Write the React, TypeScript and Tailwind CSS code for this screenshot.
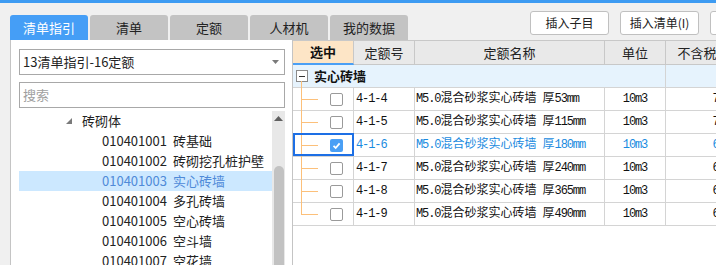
import React from 'react';

const tabs = ['清单指引', '清单', '定额', '人材机', '我的数据'];

const treeItems = [
  ['010401001', '砖基础'],
  ['010401002', '砖砌挖孔桩护壁'],
  ['010401003', '实心砖墙'],
  ['010401004', '多孔砖墙'],
  ['010401005', '空心砖墙'],
  ['010401006', '空斗墙'],
  ['010401007', '空花墙'],
];

const rows = [
  { code: '4-1-4', name: 'M5.0混合砂浆实心砖墙 厚53mm', price: '718.50' },
  { code: '4-1-5', name: 'M5.0混合砂浆实心砖墙 厚115mm', price: '723.46' },
  { code: '4-1-6', name: 'M5.0混合砂浆实心砖墙 厚180mm', price: '659.77', checked: true },
  { code: '4-1-7', name: 'M5.0混合砂浆实心砖墙 厚240mm', price: '651.28' },
  { code: '4-1-8', name: 'M5.0混合砂浆实心砖墙 厚365mm', price: '637.91' },
  { code: '4-1-9', name: 'M5.0混合砂浆实心砖墙 厚490mm', price: '632.14' },
];

// SimSun style: latin runs are half width
const Mixed = ({ text }: { text: string }) => (
  <>
    {text.split(/([\x20-\x7e]+)/).map((part, i) =>
      /^[\x20-\x7e]+$/.test(part) ? (
        <span key={i} className="font-['Liberation_Mono',monospace] text-[12px] tracking-[-1.1px] whitespace-pre">
          {part}
        </span>
      ) : (
        <span key={i}>{part}</span>
      )
    )}
  </>
);

const App = () => {
  return (
    <div className="w-[716px] h-[265px] overflow-hidden bg-[#f0f0f0] flex flex-col font-['Noto_Sans_CJK_SC',sans-serif]">
      <div className="h-[3px] shrink-0 bg-[#3d9bf2]"></div>

      {/* tabs + buttons */}
      <div className="h-[37px] shrink-0 flex">
        <div className="flex items-end gap-[2px] pl-[10px] shrink-0">
          {tabs.map((t, i) => (
            <div
              key={t}
              className={
                i === 0
                  ? 'w-[78px] h-[25px] rounded-t-[3px] flex items-center justify-center text-[13px] bg-[#459ef6] text-white'
                  : 'w-[78px] h-[25px] rounded-t-[3px] flex items-center justify-center text-[13px] bg-[#c3c3c3] text-[#222]'
              }
            >
              {t}
            </div>
          ))}
        </div>
        <div className="flex gap-[11px] pt-[8px] ml-[122px] shrink-0">
          {['插入子目', '插入清单(I)', '删除'].map((b) => (
            <div
              key={b}
              className="w-[79px] h-[24px] shrink-0 bg-white border border-[#c0c0c0] rounded-[3px] flex items-center justify-center text-[12px] text-[#222]"
            >
              {b}
            </div>
          ))}
        </div>
      </div>

      <div className="flex-1 min-h-0 flex">
        {/* left panel */}
        <div className="ml-[10px] w-[283px] shrink-0 bg-white border-l border-r border-[#c4c4c4] flex flex-col pl-[8px] pt-[9px]">
          <div className="w-[266px] h-[26px] border border-[#a8a8a8] flex items-center pl-[3px] pr-[5px] text-[13px] text-[#222]">
            <span>13清单指引-16定额</span>
            <svg className="ml-auto" width="7" height="4" viewBox="0 0 7 4">
              <polygon points="0,0 7,0 3.5,4" fill="#7a7a7a" />
            </svg>
          </div>
          <div className="mt-[7px] w-[266px] h-[26px] border border-[#a8a8a8] flex items-center pl-[3px] text-[13px] text-[#a0a0a0]">
            搜索
          </div>
          <div className="mt-[3px] flex-1 min-h-0 flex">
            <div className="w-[253px] flex flex-col text-[13px] text-[#222]">
              <div className="h-[20px] shrink-0 flex items-center pl-[47px]">
                <svg width="6" height="6" viewBox="0 0 6 6">
                  <polygon points="6,0 6,6 0,6" fill="#7a7a7a" />
                </svg>
                <span className="ml-[10px]">砖砌体</span>
              </div>
              {treeItems.map(([code, name]) => (
                <div
                  key={code}
                  className={
                    code === '010401003'
                      ? 'h-[20px] shrink-0 flex items-center pl-[83px] bg-[#cce8ff] text-[#4f8ad8]'
                      : 'h-[20px] shrink-0 flex items-center pl-[83px]'
                  }
                >
                  <span className="w-[71px]">{code}</span>
                  <span>{name}</span>
                </div>
              ))}
            </div>
            <div className="w-[13px] bg-[#e8e8e8] flex flex-col items-center">
              <svg className="mt-[5px] shrink-0" width="9" height="5" viewBox="0 0 9 5">
                <polygon points="4.5,0 9,5 0,5" fill="#606060" />
              </svg>
              <div className="mt-[45px] w-[10px] flex-1 rounded-t-full bg-[#c2c2c2]"></div>
            </div>
          </div>
        </div>

        {/* quota table */}
        <div className="flex-1 min-w-0 bg-white overflow-hidden border-t border-[#c8c8c8]">
          <div className="w-[475px] grid grid-cols-[61px_61px_190px_61px_102px] text-[#111]">
            <div className="h-[24px] flex items-center justify-center bg-[#fde5c6] border-r border-[#c8c8c8] border-b-2 border-b-[#4a9ff5] text-[13px] font-bold">
              选中
            </div>
            {['定额号', '定额名称', '单位', '不含税市场价'].map((h) => (
              <div
                key={h}
                className="h-[24px] flex items-center justify-center bg-[#e9e9e9] border-r border-b border-[#c8c8c8] text-[13px] text-[#222] whitespace-nowrap"
              >
                {h}
              </div>
            ))}

            {/* group row */}
            <div className="col-span-4 relative h-[23px] flex items-center pl-[3px] bg-[#e6f3fd] border-r border-b border-[#d4d4d4]">
              <div className="w-[12px] h-[12px] border border-[#8a8a8a] bg-white flex items-center justify-center">
                <div className="w-[6px] h-px bg-[#333]"></div>
              </div>
              <span className="ml-[6px] text-[13px] font-bold">实心砖墙</span>
              <div className="absolute left-[8px] top-[16px] -bottom-px w-px bg-[#fcc07a]"></div>
            </div>
            <div className="h-[23px] bg-[#e6f3fd] border-b border-[#d4d4d4]"></div>

            {rows.map((r, i) => {
              const last = i === rows.length - 1;
              const text = r.checked ? 'text-[#1a8be0]' : 'text-[#111]';
              return (
                <React.Fragment key={r.code}>
                  <div className="relative h-[23px] flex items-center pl-[37px] border-r border-b border-[#d4d4d4]">
                    <div
                      className={
                        last
                          ? 'absolute left-[8px] -top-px h-[13px] w-px bg-[#fcc07a]'
                          : 'absolute left-[8px] -top-px -bottom-px w-px bg-[#fcc07a]'
                      }
                    ></div>
                    <div className="absolute left-[8px] top-[11px] w-[17px] h-px bg-[#fcc07a]"></div>
                    {r.checked ? (
                      <div className="w-[13px] h-[13px] rounded-[2px] bg-[#4a9ff5] flex items-center justify-center">
                        <svg width="11" height="11" viewBox="0 0 11 11">
                          <path d="M2.5 5.8 L4.7 8 L8.6 3.4" fill="none" stroke="white" strokeWidth="1.8" />
                        </svg>
                      </div>
                    ) : (
                      <div className="w-[13px] h-[13px] rounded-[2px] border border-[#9a9a9a] bg-white"></div>
                    )}
                    {r.checked && (
                      <div className="absolute left-0 -top-px -right-px bottom-0 border-2 border-[#1d6fe5]"></div>
                    )}
                  </div>
                  <div className={`h-[23px] flex items-center pl-[2px] border-r border-b border-[#d4d4d4] text-[12px] font-['Liberation_Mono','Noto_Sans_CJK_SC',monospace] ${text}`}>
                    <Mixed text={r.code} />
                  </div>
                  <div className={`h-[23px] flex items-center pl-px border-r border-b border-[#d4d4d4] text-[12px] whitespace-nowrap font-['Liberation_Mono','Noto_Sans_CJK_SC',monospace] ${text}`}>
                    <Mixed text={r.name} />
                  </div>
                  <div className={`h-[23px] flex items-center justify-center border-r border-b border-[#d4d4d4] text-[12px] font-['Liberation_Mono','Noto_Sans_CJK_SC',monospace] ${text}`}>
                    <Mixed text="10m3" />
                  </div>
                  <div className={`h-[23px] flex items-center justify-end pr-[19px] border-b border-[#d4d4d4] text-[12px] font-['Liberation_Mono','Noto_Sans_CJK_SC',monospace] ${text}`}>
                    <Mixed text={r.price} />
                  </div>
                </React.Fragment>
              );
            })}
          </div>
        </div>
      </div>
    </div>
  );
};

export default App;
